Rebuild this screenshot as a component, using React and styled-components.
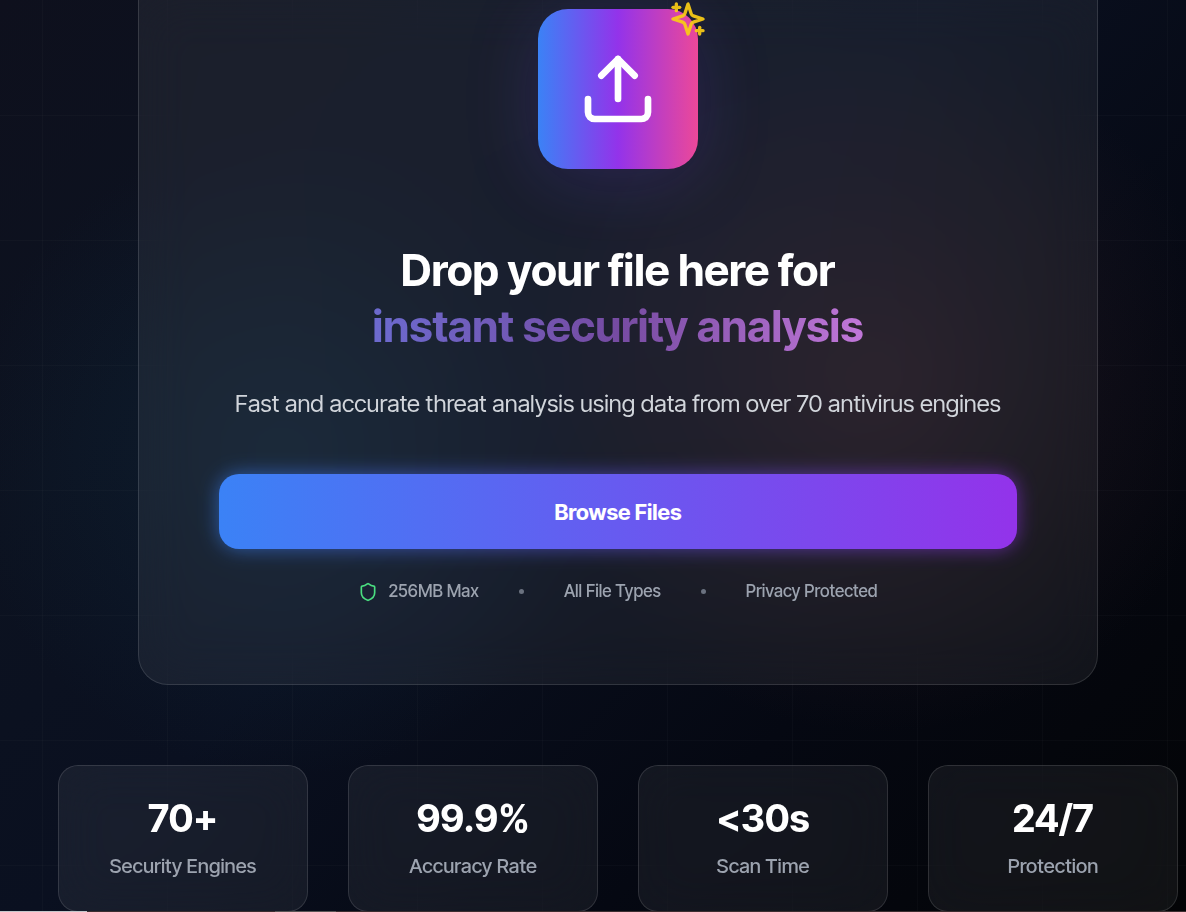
import React from "react";
import styled, { createGlobalStyle } from "styled-components";
import { Upload, Shield } from "lucide-react";

const fontStack = `"Inter Tight", Inter, "Liberation Sans", sans-serif`;

const GlobalStyle = createGlobalStyle`
  *, *::before, *::after { box-sizing: border-box; }
  html, body { margin: 0; background: #05070d; }
  body {
    font-family: ${fontStack};
    color: #fff;
    overflow-x: hidden;
  }
`;

const Page = styled.div`
  position: relative;
  isolation: isolate;
  display: flex;
  flex-direction: column;
  min-height: 100vh;
  background:
    radial-gradient(circle at 24% 50%, rgba(16, 48, 70, 0.38), transparent 320px),
    radial-gradient(circle at 74% 42%, rgba(64, 38, 44, 0.42), transparent 350px),
    linear-gradient(135deg, #0e101d 0%, #0c1220 25%, #0a1020 45%, #050812 72%, #030406 100%);
`;

const GridLines = styled.div`
  position: absolute;
  inset: 0;
  z-index: -1;
  background-image:
    linear-gradient(rgba(255, 255, 255, 0.02) 1px, transparent 1px),
    linear-gradient(90deg, rgba(255, 255, 255, 0.02) 1px, transparent 1px);
  background-size: 125px 125px;
  background-position: 42px 115px;
`;

const Content = styled.main`
  flex: 1;
  display: flex;
  flex-direction: column;
  gap: 80px;
  padding: 0 8px 0 58px;
`;

const DropCard = styled.section`
  width: 100%;
  max-width: 960px;
  margin: 0 auto;
  padding: 9px 80px 80px;
  display: flex;
  flex-direction: column;
  align-items: center;
  text-align: center;
  border: 1px solid rgba(255, 255, 255, 0.12);
  border-top: 0;
  border-radius: 0 0 30px 30px;
  background: rgba(255, 255, 255, 0.06);
  backdrop-filter: blur(25px);
`;

const IconTile = styled.div`
  position: relative;
  display: grid;
  place-items: center;
  width: 160px;
  height: 160px;
  border-radius: 30px;
  background: linear-gradient(90deg, #3b82f6, #9333ea 50%, #ec4899);
  box-shadow: 0 10px 75px rgba(110, 60, 220, 0.2);
`;

const SparkleBadge = styled.span`
  position: absolute;
  top: -10px;
  right: -10px;
  display: flex;
  color: #facc15;
  opacity: 0.93;
`;

const Title = styled.h2`
  width: 100%;
  margin: 73px 0 0;
  font-size: 44px;
  line-height: 56px;
  font-weight: 700;
`;

const Accent = styled.span`
  display: block;
  color: transparent;
  background: linear-gradient(90deg, #667eea 0%, #764ba2 50%, #f093fb 100%);
  background-clip: text;
  -webkit-background-clip: text;
`;

const Lead = styled.p`
  margin: 30px 0 0;
  font-size: 24px;
  line-height: 40px;
  color: #d1d5db;
`;

const BrowseButton = styled.button`
  position: relative;
  width: 100%;
  margin-top: 50px;
  padding: 0;
  height: 75px;
  border: 0;
  border-radius: 20px;
  font: 700 22px/30px ${fontStack};
  color: #fff;
  background: linear-gradient(90deg, #3b82f6, #9333ea);
  cursor: pointer;

  &::before {
    content: "";
    position: absolute;
    inset: 0;
    z-index: -1;
    border-radius: 20px;
    background: inherit;
    filter: blur(10px);
    opacity: 0.6;
  }
`;

const Facts = styled.ul`
  display: flex;
  align-items: center;
  justify-content: center;
  gap: 40px;
  margin: 30px 0 0;
  padding: 0;
  list-style: none;
  font-size: 17px;
  line-height: 25px;
  font-weight: 500;
  color: #9ca3af;
`;

const Fact = styled.li`
  display: flex;
  align-items: center;
  gap: 10px;
`;

const Dot = styled.li`
  width: 5px;
  height: 5px;
  border-radius: 50%;
  background: #6b7280;
`;

const Stats = styled.dl`
  display: grid;
  grid-template-columns: repeat(4, 1fr);
  gap: 40px;
  margin: 0;
`;

const StatCard = styled.div`
  display: flex;
  flex-direction: column-reverse;
  align-items: center;
  gap: 10px;
  height: 147px;
  padding: 30px;
  border: 1px solid rgba(255, 255, 255, 0.12);
  border-radius: 20px;
  background: rgba(255, 255, 255, 0.06);
  backdrop-filter: blur(25px);
`;

const StatLabel = styled.dt`
  font-size: 20px;
  line-height: 30px;
  font-weight: 500;
  color: #9ca3af;
  white-space: nowrap;
`;

const StatValue = styled.dd`
  margin: 0;
  font-size: 38px;
  line-height: 45px;
  font-weight: 700;
`;

const ProgressLine = styled.div`
  position: absolute;
  bottom: 0;
  left: 0;
  width: 100%;
  height: 1px;
  background: linear-gradient(
    90deg,
    #c4c6ca 87px,
    #3c2e30 87px,
    #3c2e30 275px,
    #5a5656 275px,
    #5a5656 336px,
    #3c2e30 336px
  );
`;

const stats = [
  { value: "70+", label: "Security Engines" },
  { value: "99.9%", label: "Accuracy Rate" },
  { value: "<30s", label: "Scan Time" },
  { value: "24/7", label: "Protection" },
];

function SparklesIcon({ size }) {
  return (
    <svg
      width={size}
      height={size}
      viewBox="0 0 24 24"
      fill="none"
      stroke="currentColor"
      strokeWidth="2"
      strokeLinecap="round"
      strokeLinejoin="round"
      aria-hidden="true"
    >
      <path d="m12 3-1.912 5.813a2 2 0 0 1-1.275 1.275L3 12l5.813 1.912a2 2 0 0 1 1.275 1.275L12 21l1.912-5.813a2 2 0 0 1 1.275-1.275L21 12l-5.813-1.912a2 2 0 0 1-1.275-1.275L12 3Z" />
      <path d="M5 3v4" />
      <path d="M19 17v4" />
      <path d="M3 5h4" />
      <path d="M17 19h4" />
    </svg>
  );
}

export default function App() {
  return (
    <Page>
      <GlobalStyle />
      <GridLines />
      <Content>
        <DropCard>
          <IconTile>
            <Upload size={80} strokeWidth={2} aria-hidden="true" />
            <SparkleBadge>
              <SparklesIcon size={40} />
            </SparkleBadge>
          </IconTile>
          <Title>
            Drop your file here for <Accent>instant security analysis</Accent>
          </Title>
          <Lead>Fast and accurate threat analysis using data from over 70 antivirus engines</Lead>
          <BrowseButton type="button">Browse Files</BrowseButton>
          <Facts>
            <Fact>
              <Shield size={20} color="#4ade80" aria-hidden="true" />
              256MB Max
            </Fact>
            <Dot aria-hidden="true" />
            <Fact>All File Types</Fact>
            <Dot aria-hidden="true" />
            <Fact>Privacy Protected</Fact>
          </Facts>
        </DropCard>
        <Stats>
          {stats.map(({ value, label }) => (
            <StatCard key={label}>
              <StatLabel>{label}</StatLabel>
              <StatValue>{value}</StatValue>
            </StatCard>
          ))}
        </Stats>
      </Content>
      <ProgressLine />
    </Page>
  );
}
